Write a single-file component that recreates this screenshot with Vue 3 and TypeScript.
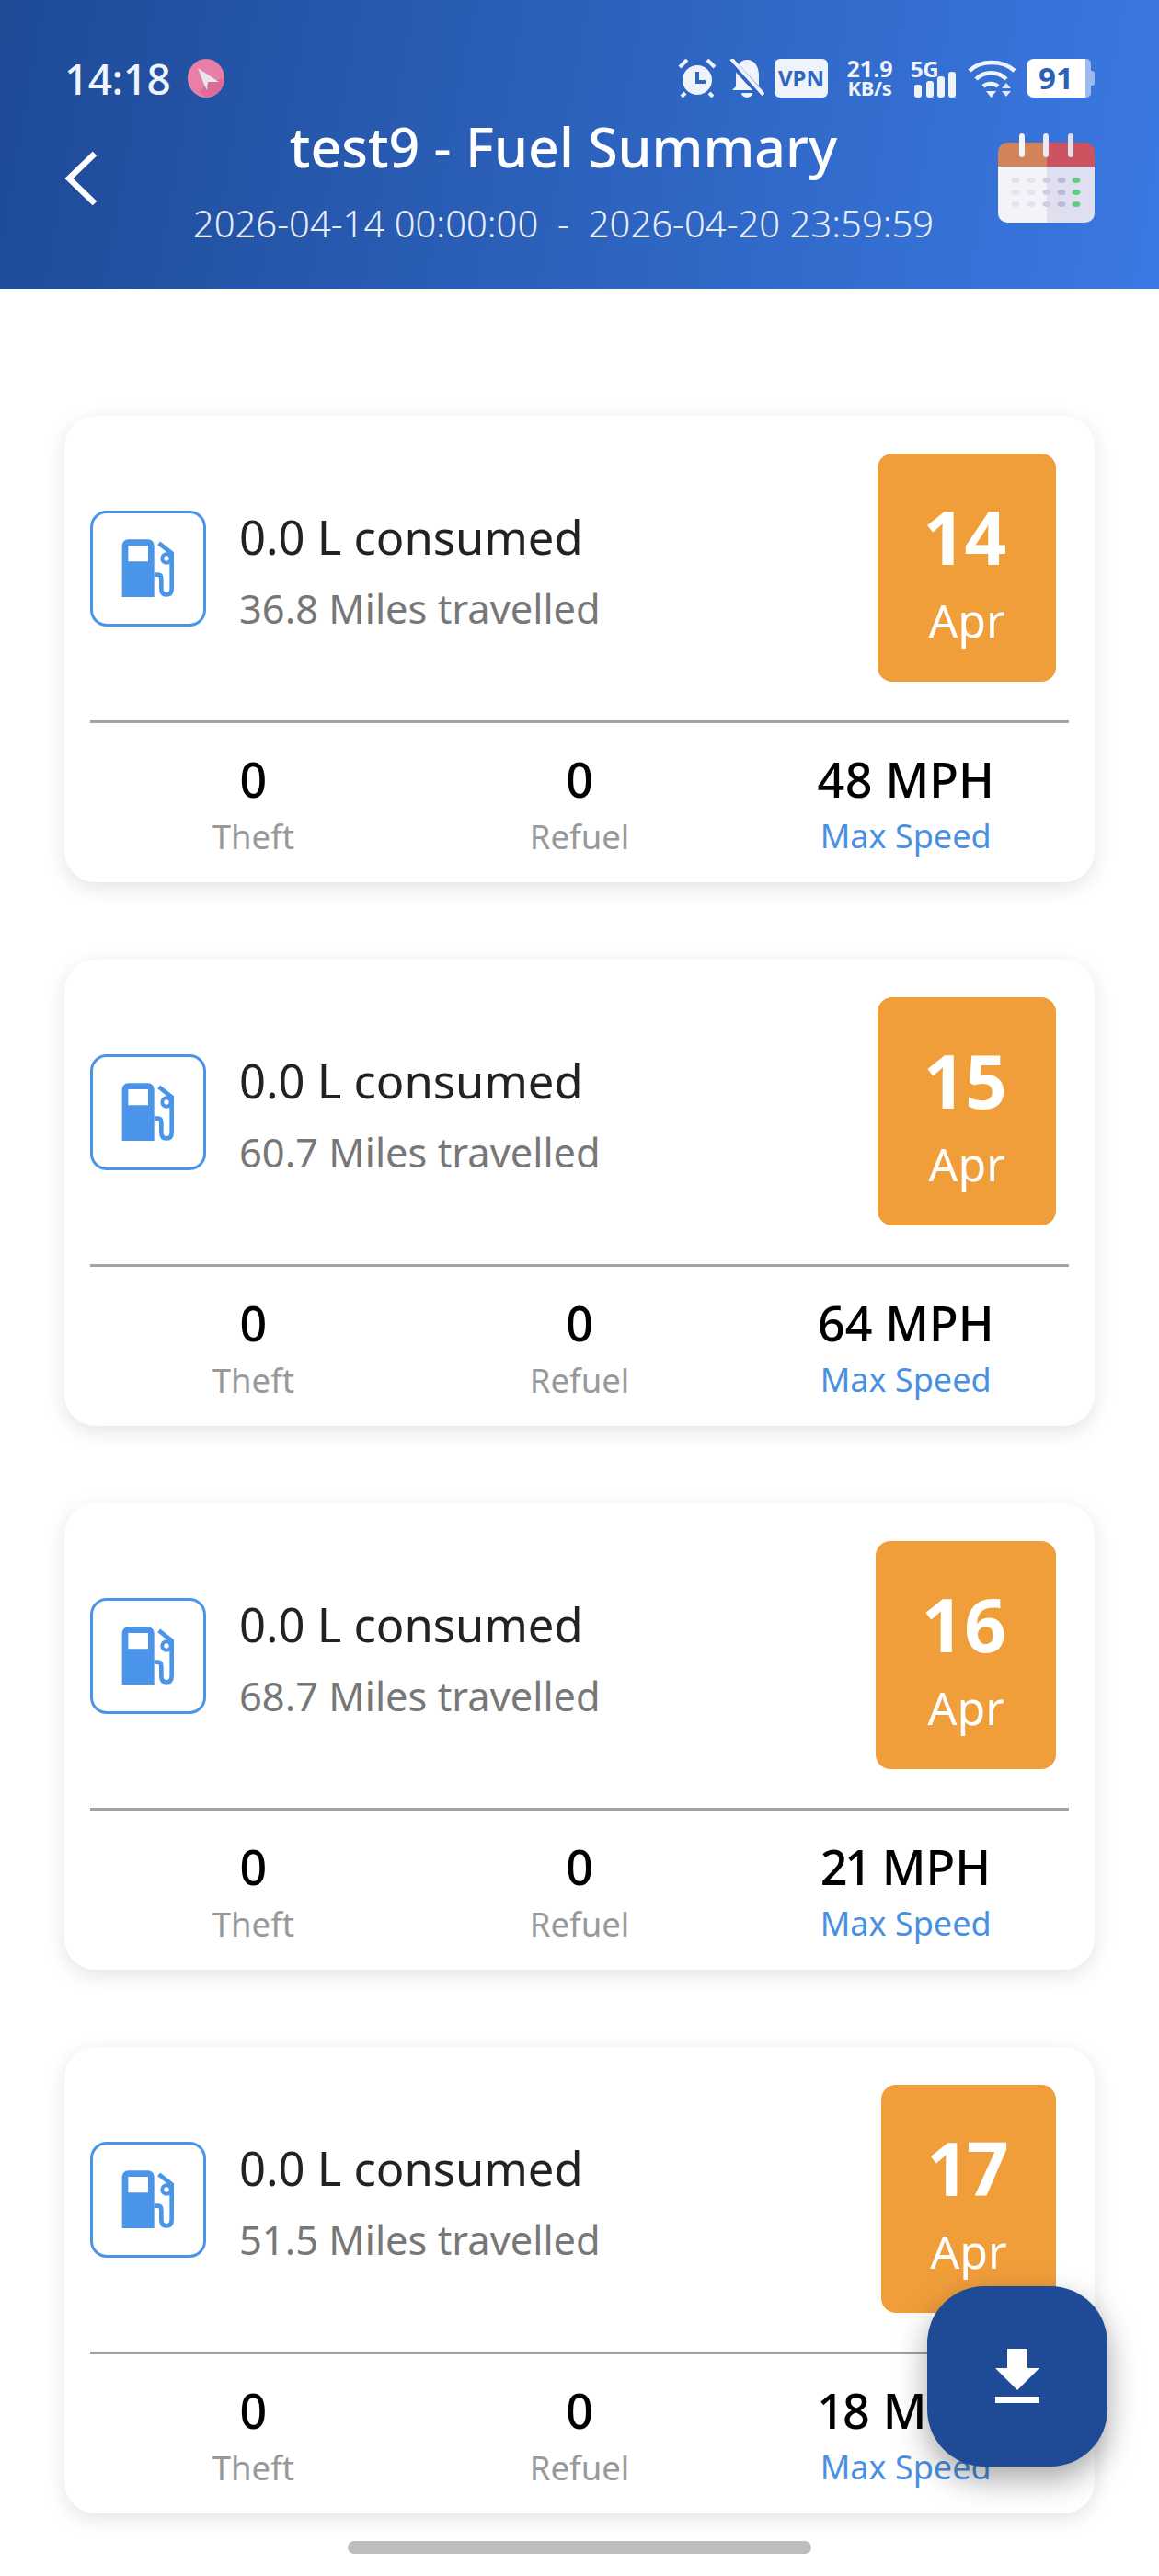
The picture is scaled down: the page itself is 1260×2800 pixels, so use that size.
<script setup lang="ts">
interface Day { day: string; miles: string; speed: string }
const days: Day[] = [
  { day: '14', miles: '36.8', speed: '48' },
  { day: '15', miles: '60.7', speed: '64' },
  { day: '16', miles: '68.7', speed: '21' },
  { day: '17', miles: '51.5', speed: '18' },
]
const dotX = [19, 36, 53, 69, 85]
const dotY = [51, 64, 77]
</script>

<template>
  <div class="page">
    <header class="header">
      <div class="status">
        <span class="time">14:18</span>
        <svg class="app-dot" width="40" height="42" viewBox="0 0 40 42">
          <ellipse cx="20" cy="21" rx="20" ry="21" fill="#e77fa6" />
          <path d="M40 21A20 21 0 0 1 20 42L13 36L22 25Z" fill="#dd6c96" />
          <path d="M11 10L34 25L22 25L21 34L18 28Z" fill="#e8e6ec" />
        </svg>
        <div class="status-right">
          <svg width="42" height="42" viewBox="0 0 42 42" fill="#eef3fc">
            <circle cx="21" cy="23" r="16" />
            <path d="M19 14h4v9h7v4H19z" fill="#2f66c4" />
            <path d="M2 9L10 1M40 9L32 1M8 37L4 41M34 37L38 41" stroke="#eef3fc" stroke-width="4" fill="none" />
          </svg>
          <svg class="bell" width="38" height="42" viewBox="0 0 38 42" fill="#eef3fc">
            <path d="M19 1C28 1 32 9 32 18V30L36 34H3L7 30V18C7 9 11 1 19 1Z" />
            <path d="M13 37h12a6 5 0 0 1-12 0Z" />
            <path d="M1 2L36 40" stroke="#2f66c4" stroke-width="8" />
            <path d="M2 0L37 39" stroke="#eef3fc" stroke-width="4" />
          </svg>
          <span class="vpn">VPN</span>
          <span class="speed"><b>21.9</b><b>KB/s</b></span>
          <div class="signal">
            <span class="five-g">5G</span>
            <svg width="47" height="28" viewBox="0 0 47 28" fill="#eef3fc">
              <rect x="2" y="14" width="8" height="14" rx="3" />
              <rect x="15" y="10" width="8" height="18" rx="3" />
              <rect x="27" y="5" width="8" height="23" rx="3" />
              <rect x="39" y="0" width="8" height="28" rx="3" />
            </svg>
          </div>
          <svg class="wifi" width="53" height="42" viewBox="0 0 53 42" fill="none" stroke="#eef3fc" stroke-width="4.5">
            <path d="M2 13C14 1 38 1 51 13" />
            <path d="M9 22C18 13 33 13 42 22" />
            <path d="M17 30C21 26 29 26 33 30" />
            <path d="M20 35H31L25.500 42Z" fill="#eef3fc" stroke="none" />
            <path d="M42 26L47 32H37ZM37 35H47L42 41Z" fill="#dfe8f8" stroke="none" />
          </svg>
          <div class="battery">
            <div class="battery-fill">91</div>
            <div class="battery-rest"></div>
            <div class="battery-nub"></div>
          </div>
        </div>
      </div>
      <div class="title-row">
        <svg class="back" width="36" height="58" viewBox="0 0 36 58" fill="none" stroke="#fff" stroke-width="6.500">
          <path d="M33 2L5 29L33 56" />
        </svg>
        <div class="titles">
          <h1 class="title">test9 - Fuel Summary</h1>
          <p class="range">2026-04-14 00:00:00 &nbsp;-&nbsp; 2026-04-20 23:59:59</p>
        </div>
        <svg class="calendar" width="105" height="97" viewBox="0 0 105 97">
          <path d="M0 36V20a10 10 0 0 1 10-10H53V36Z" fill="#d2835a" />
          <path d="M53 36V10H95a10 10 0 0 1 10 10V36Z" fill="#cb5460" />
          <path d="M0 36H53V97H10A10 10 0 0 1 0 87Z" fill="#f3f3f8" />
          <path d="M53 36H105V87A10 10 0 0 1 95 97H53Z" fill="#dfdff0" />
          <rect x="23" y="0" width="6" height="26" rx="3" fill="#f3f3f8" />
          <rect x="49" y="0" width="6" height="26" rx="3" fill="#e9e9f5" />
          <rect x="76" y="0" width="6" height="26" rx="3" fill="#dfdff0" />
          <template v-for="(x, i) in dotX" :key="x">
            <ellipse
              v-for="y in dotY"
              :key="y"
              :cx="x"
              :cy="y"
              rx="4.500"
              ry="3"
              :fill="i === 4 ? '#5fce80' : i === 3 ? '#bcbad6' : i === 2 ? '#cfcde2' : '#e3e2f1'"
            />
          </template>
        </svg>
      </div>
    </header>

    <main class="list">
      <section v-for="d in days" :key="d.day" class="card">
        <div class="top">
          <div class="icon-box">
            <svg width="64" height="70" viewBox="150 160 190 210" fill="#4a94ea">
              <path
                fill-rule="evenodd"
                d="M160 358V190a20 20 0 0 1 20-20h65a20 20 0 0 1 20 20V358ZM180 190V242H245V190Z"
              />
              <path
                d="M265 285H278Q288 285 288 300V330Q288 350 305 350Q322 350 322 330V215L280 182"
                fill="none"
                stroke="#4a94ea"
                stroke-width="14"
              />
              <circle cx="305" cy="232" r="14" fill="#fff" stroke="#4a94ea" stroke-width="12" />
            </svg>
          </div>
          <div class="text">
            <div class="consumed">0.0 L consumed</div>
            <div class="miles">{{ d.miles }} Miles travelled</div>
          </div>
          <div class="date">
            <span class="date-day">{{ d.day }}</span>
            <span class="date-month">Apr</span>
          </div>
        </div>
        <div class="stats">
          <div class="stat">
            <span class="value">0</span>
            <span class="label">Theft</span>
          </div>
          <div class="stat">
            <span class="value">0</span>
            <span class="label">Refuel</span>
          </div>
          <div class="stat">
            <span class="value">{{ d.speed }} MPH</span>
            <span class="label blue">Max Speed</span>
          </div>
        </div>
      </section>
    </main>

    <button class="fab" type="button" aria-label="Download">
      <svg width="48" height="60" viewBox="0 0 48 60" fill="#fff">
        <path d="M13 0H35V21H48L24 45L0 21H13Z" />
        <rect x="0" y="52" width="48" height="7" />
      </svg>
    </button>
    <div class="home-bar"></div>
  </div>
</template>

<style>
html, body { margin: 0; background: #fff; }
</style>

<style scoped>
.page {
  position: relative;
  width: 1260px;
  height: 2800px;
  overflow: hidden;
  background: #fff;
  font-family: "Noto Sans", "Open Sans", sans-serif;
}
.header {
  height: 314px;
  box-sizing: border-box;
  padding: 64px 70px 0;
  background: linear-gradient(100deg, #1e4a96 0%, #3a79e2 100%);
  color: #fff;
}
.status {
  display: flex;
  align-items: center;
  height: 42px;
}
.time {
  font-size: 46px;
  font-weight: 500;
  line-height: 42px;
  color: #eef3fc;
  letter-spacing: -0.5px;
}
.app-dot { margin-left: 19px; }
.status-right {
  margin-left: auto;
  display: flex;
  align-items: center;
  height: 42px;
}
.bell { margin-left: 14px; }
.vpn {
  margin-left: 11px;
  width: 58px;
  height: 42px;
  border-radius: 6px;
  background: #eef3fc;
  color: #2f66c4;
  font-size: 24px;
  font-weight: 700;
  line-height: 42px;
  text-align: center;
}
.speed {
  margin-left: 21px;
  width: 49px;
  display: flex;
  flex-direction: column;
  align-items: center;
  color: #eef3fc;
  line-height: 21px;
}
.speed b { font-size: 25px; font-weight: 700; white-space: nowrap; }
.speed b + b { font-size: 22px; letter-spacing: -0.3px; }
.signal {
  margin-left: 20px;
  position: relative;
  width: 49px;
  height: 42px;
  display: flex;
  align-items: flex-end;
}
.five-g {
  position: absolute;
  left: 0;
  top: 0;
  font-size: 24px;
  font-weight: 700;
  line-height: 22px;
  letter-spacing: -0.5px;
  color: #eef3fc;
}
.signal svg { margin-left: 2px; }
.wifi { margin-left: 13px; }
.battery {
  margin-left: 11px;
  display: flex;
  align-items: center;
  width: 74px;
  height: 42px;
}
.battery-fill {
  width: 64px;
  height: 42px;
  border-radius: 8px 0 0 8px;
  background: #fff;
  color: #2c5fb8;
  font-size: 33px;
  font-weight: 700;
  line-height: 42px;
  text-align: center;
}
.battery-rest {
  width: 6px;
  height: 42px;
  background: #9db9ee;
  border-radius: 0 5px 5px 0;
}
.battery-nub {
  width: 4px;
  height: 16px;
  background: #9db9ee;
  border-radius: 0 3px 3px 0;
}
.title-row {
  display: flex;
  align-items: flex-start;
  height: 130px;
  margin-top: 14px;
}
.back { margin-top: 45px; flex: none; }
.titles {
  flex: 1;
  min-width: 0;
  padding-left: 34px;
  text-align: center;
}
.title {
  margin: 0;
  font-size: 59px;
  font-weight: 500;
  line-height: 78px;
  white-space: nowrap;
}
.range {
  margin: 22px 0 0;
  font-size: 40px;
  font-weight: 300;
  line-height: 46px;
  color: #e6ecf8;
  white-space: nowrap;
}
.calendar { margin-top: 25px; flex: none; }
.list {
  display: flex;
  flex-direction: column;
  gap: 84px;
  margin: 138px 70px 0;
}
.card {
  height: 507px;
  box-sizing: border-box;
  padding: 41px 28px 0;
  background: #fff;
  border-radius: 34px;
  box-shadow: 0 6px 22px rgba(0, 0, 0, 0.11);
}
.top {
  display: flex;
  align-items: center;
  height: 248px;
  padding-right: 14px;
}
.icon-box {
  flex: none;
  width: 126px;
  height: 126px;
  margin-top: 2px;
  box-sizing: border-box;
  border: 3px solid #4a94ea;
  border-radius: 18px;
  display: flex;
  align-items: center;
  justify-content: center;
}
.text { margin-left: 36px; margin-top: 10px; flex: 1; }
.consumed {
  font-size: 50.700px;
  line-height: 79px;
  color: #222;
}
.miles {
  font-size: 43.400px;
  line-height: 78px;
  color: #777;
}
.date {
  flex: none;
  height: 248px;
  box-sizing: border-box;
  padding: 12px 53px 0;
  border-radius: 16px;
  background: #f09e3a;
  color: #fff;
  display: flex;
  flex-direction: column;
  align-items: center;
  justify-content: center;
}
.date-day { font-size: 80px; font-weight: 700; line-height: 92px; font-variant-numeric: proportional-nums; }
.date-month { font-size: 50px; line-height: 72px; margin-top: 9px; }
.stats {
  display: grid;
  grid-template-columns: repeat(3, 1fr);
  margin-top: 42px;
  padding-top: 31px;
  border-top: 3px solid #a2a2a2;
}
.stat {
  display: flex;
  flex-direction: column;
  align-items: center;
}
.value { font-size: 52px; font-weight: 500; line-height: 60px; color: #000; font-variant-numeric: proportional-nums; }
.label { font-size: 36.500px; line-height: 50px; margin-top: 7px; color: #999; }
.label.blue { font-size: 36px; color: #4a90e2; }
.fab {
  position: absolute;
  left: 1008px;
  top: 2485px;
  width: 196px;
  height: 196px;
  border: 0;
  padding: 0;
  border-radius: 62px;
  background: #1f4a96;
  box-shadow: 0 14px 34px rgba(0, 0, 0, 0.35);
  display: flex;
  align-items: center;
  justify-content: center;
}
.home-bar {
  position: absolute;
  left: 378px;
  top: 2762px;
  width: 504px;
  height: 14px;
  border-radius: 7px;
  background: #bdbdbd;
}
</style>
